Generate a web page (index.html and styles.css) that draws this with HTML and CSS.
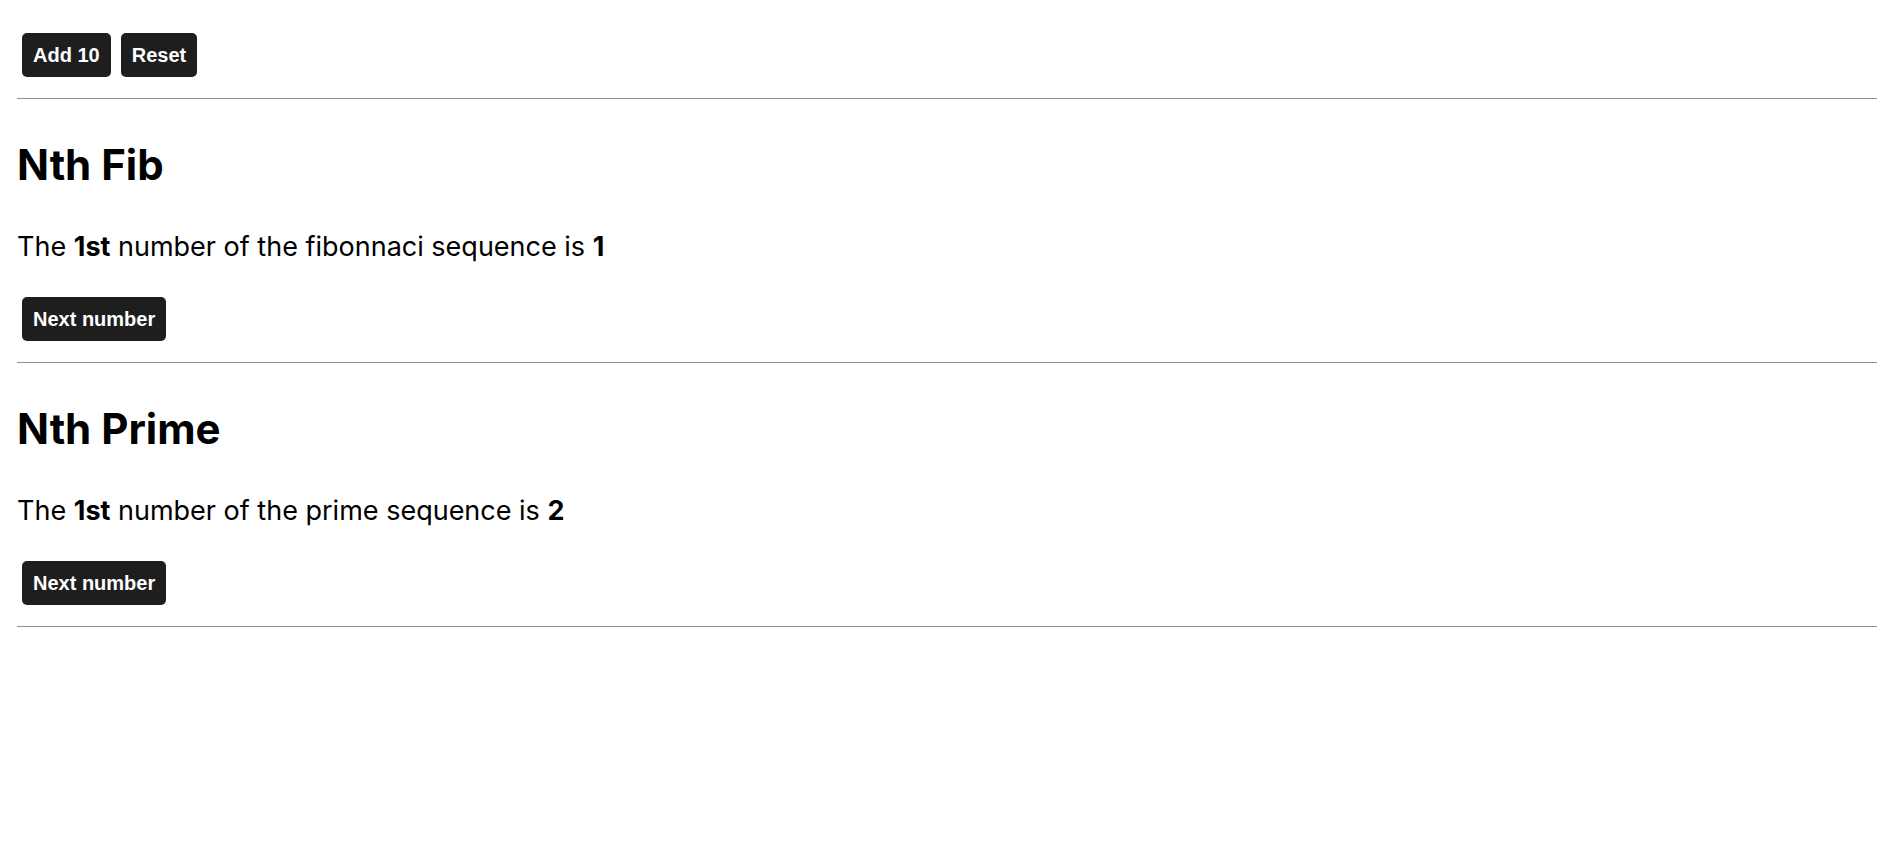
FILE: index.html
```html
<!DOCTYPE html>
<html lang="en">
<head>
<meta charset="utf-8">
<title>Nth sequences</title>
<link rel="stylesheet" href="styles.css">
</head>
<body>
  <div class="controls">
    <button class="btn">Add 10</button>
    <button class="btn">Reset</button>
  </div>
  <hr class="divider">
  <section class="seq">
    <h1 class="seq-title">Nth Fib</h1>
    <p class="seq-text">The <strong>1st</strong> number of the fibonnaci sequence is <strong>1</strong></p>
    <div class="seq-actions"><button class="btn">Next number</button></div>
  </section>
  <hr class="divider">
  <section class="seq">
    <h1 class="seq-title">Nth Prime</h1>
    <p class="seq-text">The <strong>1st</strong> number of the prime sequence is <strong>2</strong></p>
    <div class="seq-actions"><button class="btn">Next number</button></div>
  </section>
  <hr class="divider">
</body>
</html>
```
FILE: styles.css
```css
html, body {
  background: #ffffff;
}
body {
  margin: 0;
  padding: 33px 18px 0 17px;
  font-family: Inter, "Noto Sans", sans-serif;
  font-size: 27px;
  color: #000;
}
.controls {
  display: flex;
  gap: 10px;
  padding-left: 5px;
}
.btn {
  display: inline-flex;
  align-items: center;
  justify-content: center;
  height: 44px;
  padding: 0 11px;
  border: 0;
  border-radius: 5px;
  background: #1e1e1e;
  color: #ffffff;
  font-family: "Liberation Sans", Arial, sans-serif;
  font-weight: bold;
  font-size: 20px;
  line-height: 23px;
  cursor: pointer;
}
.divider {
  border: 0;
  border-top: 1px solid #929292;
  margin: 21px 0 0;
  height: 0;
}
.seq {
  display: flex;
  flex-direction: column;
  align-items: flex-start;
}
.seq-title {
  margin: 40px 0 0;
  font-size: 42px;
  line-height: 51px;
  font-weight: 700;
}
.seq-text {
  margin: 40px 0 0;
  font-size: 27px;
  line-height: 33px;
}
.seq-text strong {
  font-weight: 700;
}
.seq-actions {
  margin-top: 34px;
  padding-left: 5px;
  display: flex;
}
```
